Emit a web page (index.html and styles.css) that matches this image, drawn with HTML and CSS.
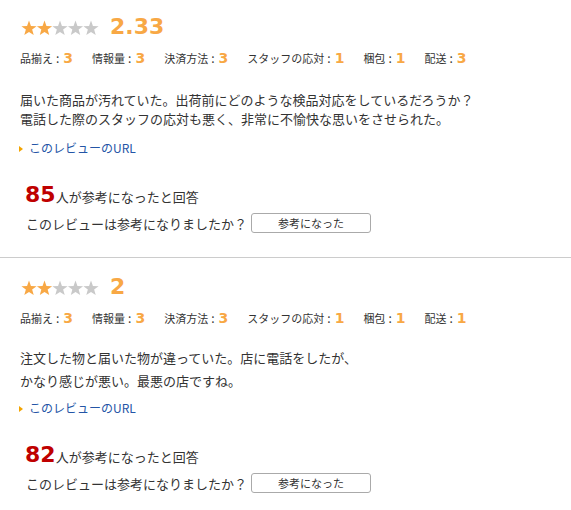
FILE: index.html
```html
<!DOCTYPE html>
<html lang="ja">
<head>
<meta charset="utf-8">
<title>レビュー</title>
<link rel="stylesheet" href="styles.css">
</head>
<body>
<div class="review-list">

<div class="review">
  <div class="review-head">
    <svg class="stars" viewBox="0 0 78 16" width="78" height="16">
      <defs>
        <polygon id="star" points="8,0.6 9.94,5.93 15.61,6.13 11.14,9.62 12.7,15.07 8,11.9 3.3,15.07 4.86,9.62 0.39,6.13 6.06,5.93"/>
      </defs>
      <use href="#star" x="0" class="on"/>
      <use href="#star" x="15.5" class="on"/>
      <use href="#star" x="31" class="off"/>
      <use href="#star" x="46.5" class="off"/>
      <use href="#star" x="62" class="off"/>
    </svg>
    <span class="score">2.33</span>
  </div>
  <ul class="ratings">
    <li>品揃え<span class="sep">:</span><b>3</b></li>
    <li>情報量<span class="sep">:</span><b>3</b></li>
    <li>決済方法<span class="sep">:</span><b>3</b></li>
    <li>スタッフの応対<span class="sep">:</span><b>1</b></li>
    <li>梱包<span class="sep">:</span><b>1</b></li>
    <li>配送<span class="sep">:</span><b>3</b></li>
  </ul>
  <p class="review-body">届いた商品が汚れていた。出荷前にどのような検品対応をしているだろうか？<br>
  電話した際のスタッフの応対も悪く、非常に不愉快な思いをさせられた。</p>
  <p class="review-link"><a href="#">このレビューのURL</a></p>
  <p class="helpful-count"><b>85</b>人が参考になったと回答</p>
  <p class="helpful-ask">このレビューは参考になりましたか？<button type="button">参考になった</button></p>
</div>

<div class="review">
  <div class="review-head">
    <svg class="stars" viewBox="0 0 78 16" width="78" height="16">
      <use href="#star" x="0" class="on"/>
      <use href="#star" x="15.5" class="on"/>
      <use href="#star" x="31" class="off"/>
      <use href="#star" x="46.5" class="off"/>
      <use href="#star" x="62" class="off"/>
    </svg>
    <span class="score">2</span>
  </div>
  <ul class="ratings">
    <li>品揃え<span class="sep">:</span><b>3</b></li>
    <li>情報量<span class="sep">:</span><b>3</b></li>
    <li>決済方法<span class="sep">:</span><b>3</b></li>
    <li>スタッフの応対<span class="sep">:</span><b>1</b></li>
    <li>梱包<span class="sep">:</span><b>1</b></li>
    <li>配送<span class="sep">:</span><b>1</b></li>
  </ul>
  <p class="review-body loose">注文した物と届いた物が違っていた。店に電話をしたが、<br>
  かなり感じが悪い。最悪の店ですね。</p>
  <p class="review-link"><a href="#">このレビューのURL</a></p>
  <p class="helpful-count"><b>82</b>人が参考になったと回答</p>
  <p class="helpful-ask">このレビューは参考になりましたか？<button type="button">参考になった</button></p>
</div>

</div>
</body>
</html>
```

FILE: styles.css
```css
/* review list */

body
{ margin: 0;
background: #fff;
color: #333;
font-family: "Noto Sans CJK JP", sans-serif;
}

.review
{ padding: 12px 0 24px 20px;
border-bottom: 1px solid #ccc;
}

.review:first-child
{ padding-top: 10px;
}

.review p
{ margin: 0;
}

/* stars + score */

.review-head
{ display: flex;
align-items: flex-end;
height: 30px;
}

.stars
{ margin: 0 11px 4px 1px;
}

.stars .on { fill: #f8a845; }
.stars .off { fill: #c9c9c9; }

.score
{ font: bold 22px/30px "DejaVu Sans", sans-serif;
color: #f8a845;
position: relative;
top: 2px;
}

/* per item ratings */

.ratings
{ display: flex;
margin: 8px 0 0;
padding: 0;
list-style: none;
height: 20px;
line-height: 20px;
font-size: 11px;
}

.ratings li
{ margin-right: 19px;
}

.ratings .sep
{ margin: 0 4px 0 3px;
font-size: 12px;
}

.ratings b
{ font: bold 14px/20px "DejaVu Sans", sans-serif;
color: #f8a845;
}

/* text */

.review .review-body
{ margin-top: 22px;
font-size: 13px;
line-height: 19px;
}

.review .review-body.loose
{ margin-top: 18px;
margin-bottom: -4px;
line-height: 23px;
}

.review .review-link
{ margin-top: 10px;
font-size: 12px;
line-height: 19px;
}

.review-link a
{ color: #2455a6;
text-decoration: none;
}

.review-link a:before
{ content: "";
display: inline-block;
vertical-align: 1px;
margin: 0 6px 0 -1px;
border-left: 4px solid #f3a400;
border-top: 3.5px solid transparent;
border-bottom: 3.5px solid transparent;
}

/* helpful */

.review .helpful-count
{ margin: 25px 0 0 5px;
font-size: 13px;
line-height: 26px;
height: 26px;
}

.helpful-count b
{ font: bold 22px/26px "DejaVu Sans", sans-serif;
color: #bf0000;
}

.review .helpful-ask
{ display: flex;
align-items: center;
height: 20px;
margin: 5px 0 0 6px;
font-size: 13px;
}

.helpful-ask button
{ width: 120px;
height: 20px;
margin-left: 4px;
padding: 0;
border: 1px solid #aaa;
border-radius: 3px;
background: #fff;
color: #333;
font: 11px "Noto Sans CJK JP", sans-serif;
}
```
